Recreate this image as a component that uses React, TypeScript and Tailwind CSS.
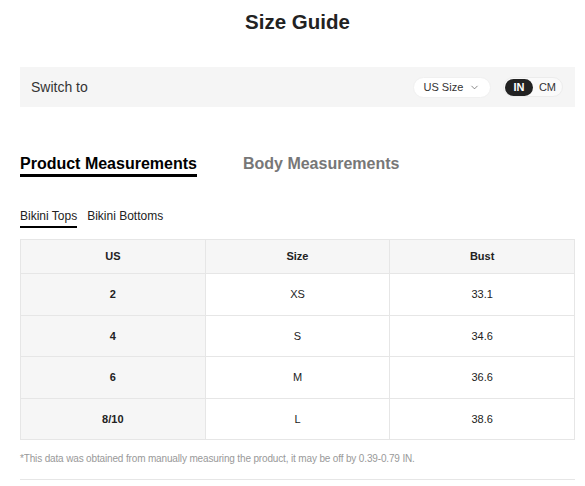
import { ChevronDown } from "lucide-react";

const rows = [
  { us: "2", size: "XS", bust: "33.1" },
  { us: "4", size: "S", bust: "34.6" },
  { us: "6", size: "M", bust: "36.6" },
  { us: "8/10", size: "L", bust: "38.6" },
];

export default function App() {
  return (
    <div className="min-h-screen bg-white font-['Liberation_Sans',Arial,sans-serif] text-[#222]">
      <div className="ml-5 w-[555px]">
        <h1 className="pt-2 text-center text-[20.5px] font-bold leading-[28px] text-[#222]">
          Size Guide
        </h1>

        <div className="mt-[31px] flex h-10 items-center justify-between bg-[#f5f5f5] pl-[11px] pr-3">
          <span className="text-[14px] text-[#333]">Switch to</span>
          <div className="flex items-center gap-3">
            <button className="flex h-[21px] w-[78px] items-center justify-center gap-[6px] rounded-full border border-[#f0f0f0] bg-white text-[11px] text-[#333]">
              US Size
              <ChevronDown size={11} strokeWidth={1.5} className="text-[#555]" />
            </button>
            <div className="flex h-[20px] items-center rounded-full border border-[#ececec] bg-[#fafafa] p-[1px] pr-[6px]">
              <span className="flex h-[17px] w-[28px] items-center justify-center rounded-full bg-[#222] text-[11px] font-bold text-white">
                IN
              </span>
              <span className="ml-[6px] text-[11px] text-[#333]">CM</span>
            </div>
          </div>
        </div>

        <div className="mt-[47px] flex items-start gap-[46px]">
          <div className="border-b-[3px] border-black text-[16px] font-bold leading-5 text-black">
            Product Measurements
          </div>
          <div className="text-[16px] font-bold leading-5 text-[#777]">
            Body Measurements
          </div>
        </div>

        <div className="mt-[31px] flex items-start gap-[10px] text-[12px] leading-4">
          <div className="border-b-2 border-black pb-[2px] text-[#222]">Bikini Tops</div>
          <div className="text-[#222]">Bikini Bottoms</div>
        </div>

        <table className="mt-[11px] w-full table-fixed border-collapse text-center text-[11px] text-[#222]">
          <thead>
            <tr className="h-[34px] bg-[#f6f6f6]">
              <th className="border border-[#e6e6e6] font-bold">US</th>
              <th className="border border-[#e6e6e6] font-bold">Size</th>
              <th className="border border-[#e6e6e6] font-bold">Bust</th>
            </tr>
          </thead>
          <tbody>
            {rows.map((r) => (
              <tr key={r.us} className="h-[41.5px]">
                <td className="border border-[#e6e6e6] bg-[#f6f6f6] font-bold">{r.us}</td>
                <td className="border border-[#e6e6e6]">{r.size}</td>
                <td className="border border-[#e6e6e6]">{r.bust}</td>
              </tr>
            ))}
          </tbody>
        </table>

        <p className="mt-[11px] text-[10px] leading-4 tracking-[-0.15px] text-[#999]">
          *This data was obtained from manually measuring the product, it may be off by 0.39-0.79 IN.
        </p>

        <div className="mt-3 border-t border-[#e6e6e6]" />
      </div>
    </div>
  );
}
